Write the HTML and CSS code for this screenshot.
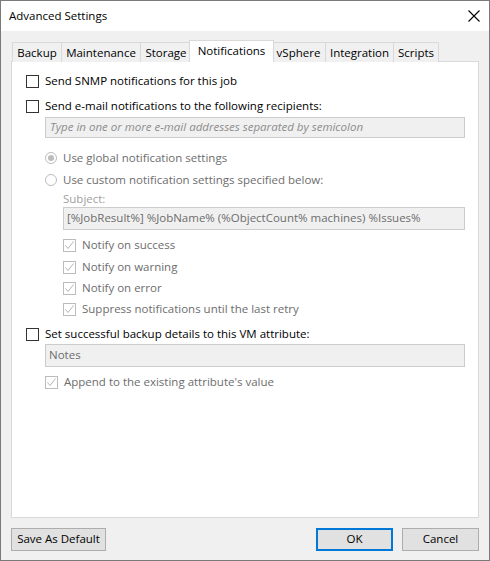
FILE: index.html
```html
<html>
    <head>
    <title>Advanced Settings</title>
        <link rel="stylesheet" href="styles.css">
    </head>
    <body>
    <div class="window">
        <div class="titlebar">
            <span>Advanced Settings</span>
            <svg class="close" width="12" height="12" viewBox="0 0 12 12">
                <path d="M0.5 0.5 L11.5 11.5 M11.5 0.5 L0.5 11.5" stroke="#000" stroke-width="1.1" fill="none"/>
            </svg>
        </div>

        <div class="dialog">
            <div class="tabs">
                <div class="tab first" style="width:50px">Backup</div>
                <div class="tab" style="width:79px">Maintenance</div>
                <div class="tab" style="width:51px">Storage</div>
                <div class="tab active">Notifications</div>
                <div class="tab" style="width:54px">vSphere</div>
                <div class="tab" style="width:68px">Integration</div>
                <div class="tab" style="width:45px">Scripts</div>
            </div>

            <div class="panel">
                <div class="row snmp">
                    <span class="box"></span>Send SNMP notifications for this job
                </div>
                <div class="row email">
                    <span class="box"></span>Send e-mail notifications to the following recipients:
                </div>
                <div class="field email-field placeholder">Type in one or more e-mail addresses separated by semicolon</div>

                <div class="row level1 off radio-global">
                    <span class="radio checked"></span>Use global notification settings
                </div>
                <div class="row level1 off radio-custom">
                    <span class="radio"></span>Use custom notification settings specified below:
                </div>
                <div class="label level2">Subject:</div>
                <div class="field level2 value">[%JobResult%] %JobName% (%ObjectCount% machines) %Issues%</div>

                <div class="row level2 off c1"><span class="box dis"><svg width="11" height="11" viewBox="0 0 11 11"><path d="M1.5 5.5 L4 8.5 L9.5 1.5" stroke="#b5b5b5" fill="none"/></svg></span>Notify on success</div>
                <div class="row level2 off c2"><span class="box dis"><svg width="11" height="11" viewBox="0 0 11 11"><path d="M1.5 5.5 L4 8.5 L9.5 1.5" stroke="#b5b5b5" fill="none"/></svg></span>Notify on warning</div>
                <div class="row level2 off c3"><span class="box dis"><svg width="11" height="11" viewBox="0 0 11 11"><path d="M1.5 5.5 L4 8.5 L9.5 1.5" stroke="#b5b5b5" fill="none"/></svg></span>Notify on error</div>
                <div class="row level2 off c3"><span class="box dis"><svg width="11" height="11" viewBox="0 0 11 11"><path d="M1.5 5.5 L4 8.5 L9.5 1.5" stroke="#b5b5b5" fill="none"/></svg></span>Suppress notifications until the last retry</div>

                <div class="row vm">
                    <span class="box"></span>Set successful backup details to this VM attribute:
                </div>
                <div class="field level1 value notes">Notes</div>
                <div class="row level1 off append"><span class="box dis"><svg width="11" height="11" viewBox="0 0 11 11"><path d="M1.5 5.5 L4 8.5 L9.5 1.5" stroke="#b5b5b5" fill="none"/></svg></span>Append to the existing attribute's value</div>
            </div>

            <div class="footer">
                <div class="btn save">Save As Default</div>
                <div class="actions">
                    <div class="btn ok">OK</div>
                    <div class="btn">Cancel</div>
                </div>
            </div>
        </div>
    </div>
    </body>
</html>
```

FILE: styles.css
```css
body {
    margin: 0;
    font-family: "Open Sans", "Liberation Sans", sans-serif;
    font-size: 11.5px;
    color: #000;
}

.window {
    width: 490px;
    height: 561px;
    box-sizing: border-box;
    border: 1px solid #7a7a7a;
    display: flex;
    flex-direction: column;
    background: #fff;
}

.titlebar {
    height: 30px;
    display: flex;
    align-items: center;
    justify-content: space-between;
    padding: 0 9px 1px 8px;
    box-sizing: border-box;
    font-size: 11.5px;
}

.close {
    margin-top: 1px;
}

.dialog {
    flex: 1;
    background: #f0f0f0;
    padding: 9px 10px 0 10px;
}

.tabs {
    display: flex;
    align-items: flex-end;
    height: 22px;
    padding-left: 1px;
    margin-bottom: -1px;
    position: relative;
    z-index: 1;
}

.tab {
    height: 20px;
    box-sizing: border-box;
    border-top: 1px solid #d9d9d9;
    border-right: 1px solid #d9d9d9;
    background: #f0f0f0;
    text-align: center;
    line-height: 18px;
    padding-top: 1px;
    white-space: nowrap;
}

.tab.first {
    border-left: 1px solid #d9d9d9;
}

.tab.active {
    width: 85px;
    height: 22px;
    margin: 0 -2px 0 -3px;
    background: #fff;
    border: 1px solid #d9d9d9;
    border-bottom: none;
    line-height: 17px;
    position: relative;
    z-index: 2;
}

.panel {
    height: 457px;
    box-sizing: border-box;
    border: 1px solid #d9d9d9;
    background: #fff;
    padding: 0 13px 0 14px;
}

.row {
    display: flex;
    align-items: center;
    height: 20px;
    line-height: 18px;
}

.box {
    width: 13px;
    height: 13px;
    box-sizing: border-box;
    border: 1px solid #333;
    background: #fff;
    margin-right: 6px;
    display: flex;
    align-items: center;
    justify-content: center;
}

.box.dis {
    border-color: #bcbcbc;
}

.radio {
    width: 12px;
    height: 12px;
    box-sizing: border-box;
    border: 1px solid #bcbcbc;
    border-radius: 50%;
    margin-right: 6px;
    display: flex;
    align-items: center;
    justify-content: center;
}

.radio.checked::after {
    content: "";
    width: 6px;
    height: 6px;
    border-radius: 50%;
    background: #bcbcbc;
}

.off {
    color: #6d6d6d;
}

.level1 {
    margin-left: 19px;
}

.level2 {
    margin-left: 37px;
}

.snmp { margin-top: 9px; }
.email { margin-top: 5px; }

.field {
    height: 21px;
    box-sizing: border-box;
    border: 1px solid #cccccc;
    background: #f0f0f0;
    padding-left: 4px;
    line-height: 18px;
    white-space: nowrap;
    overflow: hidden;
}

.email-field {
    margin: 1px 0 0 19px;
}

.placeholder {
    font-style: italic;
    color: #8c8c8c;
}

.value {
    height: 23px;
    line-height: 20px;
    color: #6d6d6d;
    padding-left: 3px;
}

.radio-global { margin-top: 10px; }
.radio-custom { margin-top: 2px; }

.label {
    height: 16px;
    line-height: 15px;
    margin-top: 1px;
    color: #a0a0a0;
}

.c1 { margin-top: 5px; }
.c2 { margin-top: 2px; }
.c3 { margin-top: 1px; }

.vm { margin-top: 5px; }

.append { margin-top: 5px; }

.footer {
    display: flex;
    justify-content: space-between;
    margin-top: 10px;
}

.actions {
    display: flex;
    gap: 9px;
}

.btn {
    width: 77px;
    height: 23px;
    box-sizing: border-box;
    border: 1px solid #adadad;
    background: #e1e1e1;
    text-align: center;
    line-height: 20px;
}

.btn.save {
    width: 95px;
}

.btn.ok {
    border: 2px solid #0078d7;
    line-height: 18px;
}
```
